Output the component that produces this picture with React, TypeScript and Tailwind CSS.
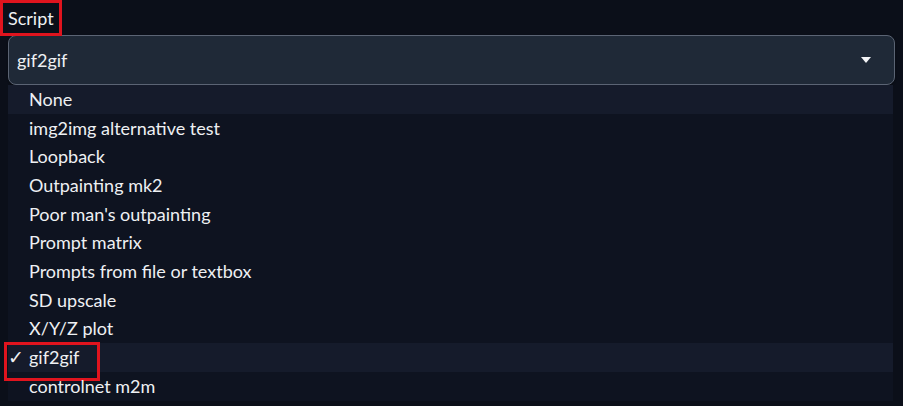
import React from "react";

const items = [
  "None",
  "img2img alternative test",
  "Loopback",
  "Outpainting mk2",
  "Poor man's outpainting",
  "Prompt matrix",
  "Prompts from file or textbox",
  "SD upscale",
  "X/Y/Z plot",
  "gif2gif",
  "controlnet m2m",
];

export default function App() {
  return (
    <div
      className="w-[903px] h-[406px] bg-[#0b0f19] overflow-hidden text-[18px] text-[#eef0f3]"
      style={{ fontFamily: "Lato, 'Noto Sans', sans-serif" }}
    >
      <div className="h-[35px] flex items-start">
        <span className="inline-flex shrink-0 items-center h-[36px] w-[62px] border-[3px] border-[#e0141e] pl-[5px] leading-none">
          Script
        </span>
      </div>
      <div className="mx-2 h-[50px] rounded-lg border border-[#5b6474] bg-[#1f2937] flex items-center justify-between pl-[8px] pr-[22px] shadow-[0_1px_2px_rgba(0,0,0,0.4)]">
        <span>gif2gif</span>
        <svg width="12" height="8" viewBox="0 0 12 8">
          <path d="M1 1 L11 1 L6 7 Z" fill="#f3f4f6" />
        </svg>
      </div>
      <div className="ml-2 mr-[10px] bg-[#0e1320]">
        {items.map((it) => {
          const sel = it === "gif2gif";
          const hl = it === "None" || sel;
          return (
            <div
              key={it}
              className={`relative h-[28.7px] flex items-center ${hl ? "bg-[#151b2b]" : ""}`}
            >
              {sel && (
                <>
                  <span className="absolute left-0 text-[19px]">✓</span>
                  <span className="absolute left-[-4px] top-[-1px] h-[39px] w-[96px] border-[3px] border-[#e0141e]" />
                </>
              )}
              <span className="pl-[21px]">{it}</span>
            </div>
          );
        })}
      </div>
    </div>
  );
}
